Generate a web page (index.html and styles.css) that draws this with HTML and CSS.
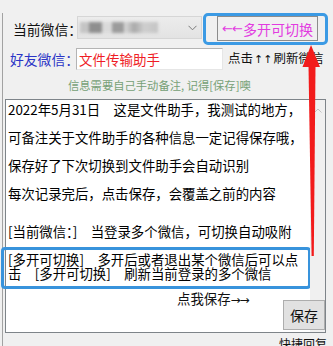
FILE: index.html
```html
<!DOCTYPE html>
<html lang="zh">
<head>
<meta charset="utf-8">
<title>文件助手</title>
<link rel="stylesheet" href="styles.css">
</head>
<body>
<div class="win">
  <div class="row row-current">
    <span class="label">当前微信：</span>
    <div class="combo">
      <div class="mosaic"><i class="m m1"></i><i class="m m2"></i><i class="m m3"></i><i class="m m4"></i><i class="m m5"></i></div>
      <svg class="caret" width="9" height="6" viewBox="0 0 9 6"><path d="M0.5 0.8 L4.5 4.8 L8.5 0.8" fill="none" stroke="#7a7a7a" stroke-width="1"/></svg>
    </div>
    <div class="focus-ring">
      <div class="multi-btn"><span class="arrows">←←</span>多开可切换</div>
    </div>
  </div>
  <div class="row row-friend">
    <span class="label label-blue">好友微信：</span>
    <div class="textbox">文件传输助手</div>
    <span class="refresh-hint">点击<span class="up-arrows">↑↑</span>刷新微信</span>
  </div>
  <div class="note">信息需要自己手动备注, 记得[保存]噢</div>
  <div class="editor">
    <div class="editor-text">
      <p>2022年5月31日　这是文件助手，我测试的地方，</p>
      <p>可备注关于文件助手的各种信息一定记得保存哦，</p>
      <p>保存好了下次切换到文件助手会自动识别</p>
      <p>每次记录完后，点击保存，会覆盖之前的内容</p>
      <p class="para-gap">[当前微信：]　当登录多个微信，可切换自动吸附</p>
      <div class="highlight">
        <p>[多开可切换]　多开后或者退出某个微信后可以点<br>击　[多开可切换]　刷新当前登录的多个微信</p>
      </div>
    </div>
    <div class="scrollbar">
      <svg class="scroll-up" width="8" height="5" viewBox="0 0 8 5"><path d="M0.5 4.5 L4 1 L7.5 4.5" fill="none" stroke="#c2c2c2" stroke-width="1"/></svg>
    </div>
    <span class="save-tip">点我保存<span class="right-arrows">→→</span></span>
    <div class="save-btn">保存</div>
  </div>
  <div class="footer">快捷回复</div>
</div>
<svg class="red-arrow" width="333" height="346" viewBox="0 0 333 346">
  <polygon points="311,45 302.5,67 320,67" fill="#f21b1b"/>
  <polygon points="308.5,66 315.5,66 313.8,256 311.6,256" fill="#f21b1b"/>
</svg>
</body>
</html>
```

FILE: styles.css
```css
html, body {
  margin: 0;
  padding: 0;
  overflow: hidden;
}

body {
  width: 333px;
  height: 346px;
  background: #f0f0f0;
  font-family: "Noto Sans CJK SC", "Noto Sans", sans-serif;
  color: #111;
}

.win {
  margin-left: 2px;
  border-left: 1px solid #a2a2a2;
  height: 346px;
  box-sizing: border-box;
}

.row {
  display: flex;
  white-space: nowrap;
}

.row-current {
  margin-top: 13px;
  height: 32px;
  align-items: center;
}

.label {
  font-size: 13.8px;
  line-height: 18px;
  flex: none;
  overflow: visible;
}

.row-current .label {
  padding-left: 10px;
  width: 64px;
}

.combo {
  flex: none;
  align-self: flex-start;
  margin-top: 3px;
  width: 125px;
  height: 23px;
  box-sizing: border-box;
  background: linear-gradient(#ececec, #e3e3e3);
  border: 1px solid #d6d6d6;
  display: flex;
  align-items: center;
  justify-content: space-between;
  padding: 0 4px 0 2px;
}

.mosaic {
  display: flex;
  align-items: center;
  height: 12px;
  filter: blur(1.6px);
}

.m {
  display: block;
  height: 11px;
}

.m1 { width: 9px; background: #c4c4c4; }
.m2 { width: 13px; background: #8f8f8f; }
.m3 { width: 10px; background: #dadada; }
.m4 { width: 12px; background: #9c9c9c; }
.m5 { width: 34px; background: linear-gradient(90deg, #dcdcdc, #a9a9a9 30%, #cfcfcf 60%, #c4c4c4); }

.caret {
  flex: none;
}

.focus-ring {
  flex: none;
  margin-left: 1px;
  width: 125px;
  height: 32px;
  box-sizing: border-box;
  border: 3px solid #3b9ae4;
  border-radius: 5px;
  padding-left: 11px;
}

.multi-btn {
  display: flex;
  align-items: center;
  justify-content: center;
  width: 101px;
  height: 25px;
  box-sizing: border-box;
  background: #f0f0f0;
  border: 1px solid #8c8c8c;
  color: #e23ce0;
  font-size: 14px;
  line-height: 18px;
}

.arrows {
  font-family: "DejaVu Sans", sans-serif;
  font-size: 13px;
  letter-spacing: -1px;
  margin-right: 1px;
}

.row-friend {
  margin-top: 3px;
  height: 22px;
  align-items: center;
}

.row-friend .label {
  padding-left: 7px;
  width: 66px;
}

.label-blue {
  color: #2a34c6;
}

.textbox {
  flex: none;
  width: 147px;
  height: 22px;
  box-sizing: border-box;
  background: #fff;
  border: 1px solid #b4b4b4;
  border-right-color: #e6e6e6;
  border-bottom-color: #e6e6e6;
  color: #ef1d26;
  font-size: 13.5px;
  line-height: 20px;
  padding-left: 2px;
}

.refresh-hint {
  margin-left: 5px;
  font-size: 12.5px;
  line-height: 16px;
  color: #111;
}

.up-arrows {
  font-family: "DejaVu Sans", sans-serif;
  font-size: 11px;
  margin: 0 1px;
}

.note {
  margin-top: 8px;
  padding-left: 65px;
  font-size: 11.3px;
  line-height: 14px;
  color: #76a076;
  white-space: nowrap;
}

.editor {
  position: relative;
  margin-top: 7px;
  margin-left: 2px;
  width: 321px;
  height: 234px;
  box-sizing: border-box;
  border: 1px solid #7e8489;
  background: #fff;
  display: flex;
}

.editor-text {
  flex: 1;
  padding: 2px 0 0 2px;
  font-size: 13.4px;
  color: #000;
  white-space: nowrap;
}

.editor-text p {
  margin: 14px 0 0 0;
  line-height: 14px;
}

.editor-text p:first-child {
  margin-top: 0;
}

.editor-text p.para-gap {
  margin-top: 24px;
}

.highlight {
  margin: 9px -1px 0 -7px;
  border: 3px solid #3893dc;
  border-radius: 4px;
  padding: 2px 0 6px 4px;
}

.highlight p {
  margin: 0;
}

.scrollbar {
  flex: none;
  width: 15px;
  background: #f0f0f0;
  display: flex;
  justify-content: center;
  align-items: flex-start;
  padding-top: 8px;
  box-sizing: border-box;
}

.save-tip {
  position: absolute;
  left: 171px;
  top: 191px;
  font-size: 13.4px;
  line-height: 14px;
  color: #111;
  white-space: nowrap;
}

.right-arrows {
  font-family: "DejaVu Sans", sans-serif;
  font-size: 12px;
  letter-spacing: -1px;
}

.save-btn {
  position: absolute;
  left: 277px;
  top: 200px;
  width: 42px;
  height: 30px;
  box-sizing: border-box;
  background: #e1e1e1;
  border: 1px solid #adadad;
  font-size: 14px;
  line-height: 28px;
  text-align: center;
  color: #111;
}

.footer {
  margin-top: 4px;
  padding-left: 276px;
  font-size: 12px;
  line-height: 14px;
  color: #111;
  white-space: nowrap;
}

.red-arrow {
  position: absolute;
  left: 0;
  top: 0;
  pointer-events: none;
}
```
